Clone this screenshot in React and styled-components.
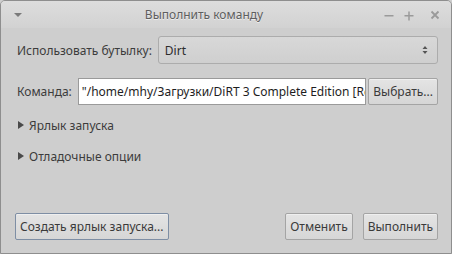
import React from "react";
import styled, { createGlobalStyle } from "styled-components";

const Global = createGlobalStyle`
  html, body { margin: 0; padding: 0; background: #cecece; }
  body { font-family: "Noto Sans", "Open Sans", sans-serif; font-size: 12px; color: #3c3c3c; }
`;

const Window = styled.div`
  width: 452px;
  height: 254px;
  box-sizing: border-box;
  border: 1px solid #8e8e8e;
  border-radius: 5px 5px 0 0;
  background: #cecece;
  display: flex;
  flex-direction: column;
  overflow: hidden;
`;

const TitleBar = styled.div`
  height: 27px;
  flex: none;
  display: flex;
  align-items: center;
  padding: 0 9px 0 11px;
  background: linear-gradient(#dddddd, #d2d2d2);
  color: #5e5e5e;
  font-size: 12px;
  text-shadow: 0 1px 0 #ececec;
`;

const Title = styled.div`
  flex: 1;
  text-align: center;
`;

const TitleButtons = styled.div`
  display: flex;
  align-items: center;
`;

const TitleIcon = styled.svg`
  width: 14px;
  height: 14px;
  display: block;
  margin-left: ${(p) => p.$ml || 0}px;
`;

const Body = styled.div`
  flex: 1;
  display: flex;
  flex-direction: column;
  padding: 8px 13px 13px 14px;
`;

const Row = styled.div`
  display: flex;
  align-items: center;
  gap: 6px;
  height: 28px;
  margin-bottom: ${(p) => p.$mb || 0}px;
`;

const Label = styled.span`
  padding-left: 2px;
  white-space: nowrap;
`;

const Combo = styled.div`
  flex: 1;
  height: 28px;
  box-sizing: border-box;
  border: 1px solid #acacac;
  border-radius: 3px;
  background: linear-gradient(#d8d8d8, #cfcfcf);
  display: flex;
  align-items: center;
  padding: 0 8px 0 6px;
  color: #2c2c2c;
`;

const ComboText = styled.span`
  flex: 1;
`;

const Entry = styled.div`
  flex: 1;
  min-width: 0;
  height: 27px;
  box-sizing: border-box;
  border: 1px solid #9a9a9a;
  background: #ffffff;
  display: flex;
  align-items: center;
  padding: 0 3px;
  overflow: hidden;
  white-space: nowrap;
  color: #1e1e1e;
`;

const Button = styled.div`
  height: 27px;
  box-sizing: border-box;
  border: 1px solid ${(p) => (p.$focus ? "#7e8ea4" : "#a4a4a4")};
  border-radius: 2px;
  background: linear-gradient(#e4e4e4, #d6d6d6);
  box-shadow: inset 0 1px 0 #efefef;
  display: flex;
  align-items: center;
  justify-content: center;
  padding: 0 4px;
  margin-left: ${(p) => p.$ml || 0}px;
  color: #3a3a3a;
  white-space: nowrap;
`;

const Expander = styled.div`
  display: flex;
  align-items: center;
  gap: 5px;
  padding-left: 3px;
  height: 20px;
  margin-top: ${(p) => p.$mt}px;
`;

const Arrow = styled.span`
  width: 0;
  height: 0;
  border-top: 4px solid transparent;
  border-bottom: 4px solid transparent;
  border-left: 6px solid #4a4a4a;
`;

const Spacer = styled.div`
  flex: 1;
`;

const Footer = styled.div`
  display: flex;
  align-items: center;
  gap: 10px;
`;

export default function App() {
  return (
    <>
      <Global />
      <Window>
        <TitleBar>
          <TitleIcon viewBox="0 0 14 14">
            <path d="M2 5h8l-4 4z" fill="#7a7a7a" />
          </TitleIcon>
          <Title>Выполнить команду</Title>
          <TitleButtons>
            <TitleIcon viewBox="0 0 14 14">
              <rect x="2.5" y="7" width="9" height="1.5" fill="#9a9a9a" />
            </TitleIcon>
            <TitleIcon $ml={6} viewBox="0 0 14 14">
              <rect x="2.5" y="7" width="9" height="1.5" fill="#9a9a9a" />
              <rect x="6.25" y="3.5" width="1.5" height="9" fill="#9a9a9a" />
            </TitleIcon>
            <TitleIcon $ml={12} viewBox="0 0 14 14">
              <path d="M3.5 3.5l7 7M10.5 3.5l-7 7" stroke="#9a9a9a" strokeWidth="1.8" />
            </TitleIcon>
          </TitleButtons>
        </TitleBar>
        <Body>
          <Row $mb={13}>
            <Label>Использовать бутылку:</Label>
            <Combo>
              <ComboText>Dirt</ComboText>
              <svg width="8" height="12" viewBox="0 0 8 12">
                <path d="M1.5 5l2.5-3 2.5 3z M1.5 7l2.5 3 2.5-3z" fill="#555" />
              </svg>
            </Combo>
          </Row>
          <Row>
            <Label>Команда:</Label>
            <Entry>"/home/mhy/Загрузки/DiRT 3 Complete Edition [Repack]/dirt3.exe"</Entry>
            <Button $ml={-4}>Выбрать...</Button>
          </Row>
          <Expander $mt={10}>
            <Arrow />
            Ярлык запуска
          </Expander>
          <Expander $mt={11}>
            <Arrow />
            Отладочные опции
          </Expander>
          <Spacer />
          <Footer>
            <Button $focus>Создать ярлык запуска...</Button>
            <Spacer />
            <Button>Отменить</Button>
            <Button>Выполнить</Button>
          </Footer>
        </Body>
      </Window>
    </>
  );
}
